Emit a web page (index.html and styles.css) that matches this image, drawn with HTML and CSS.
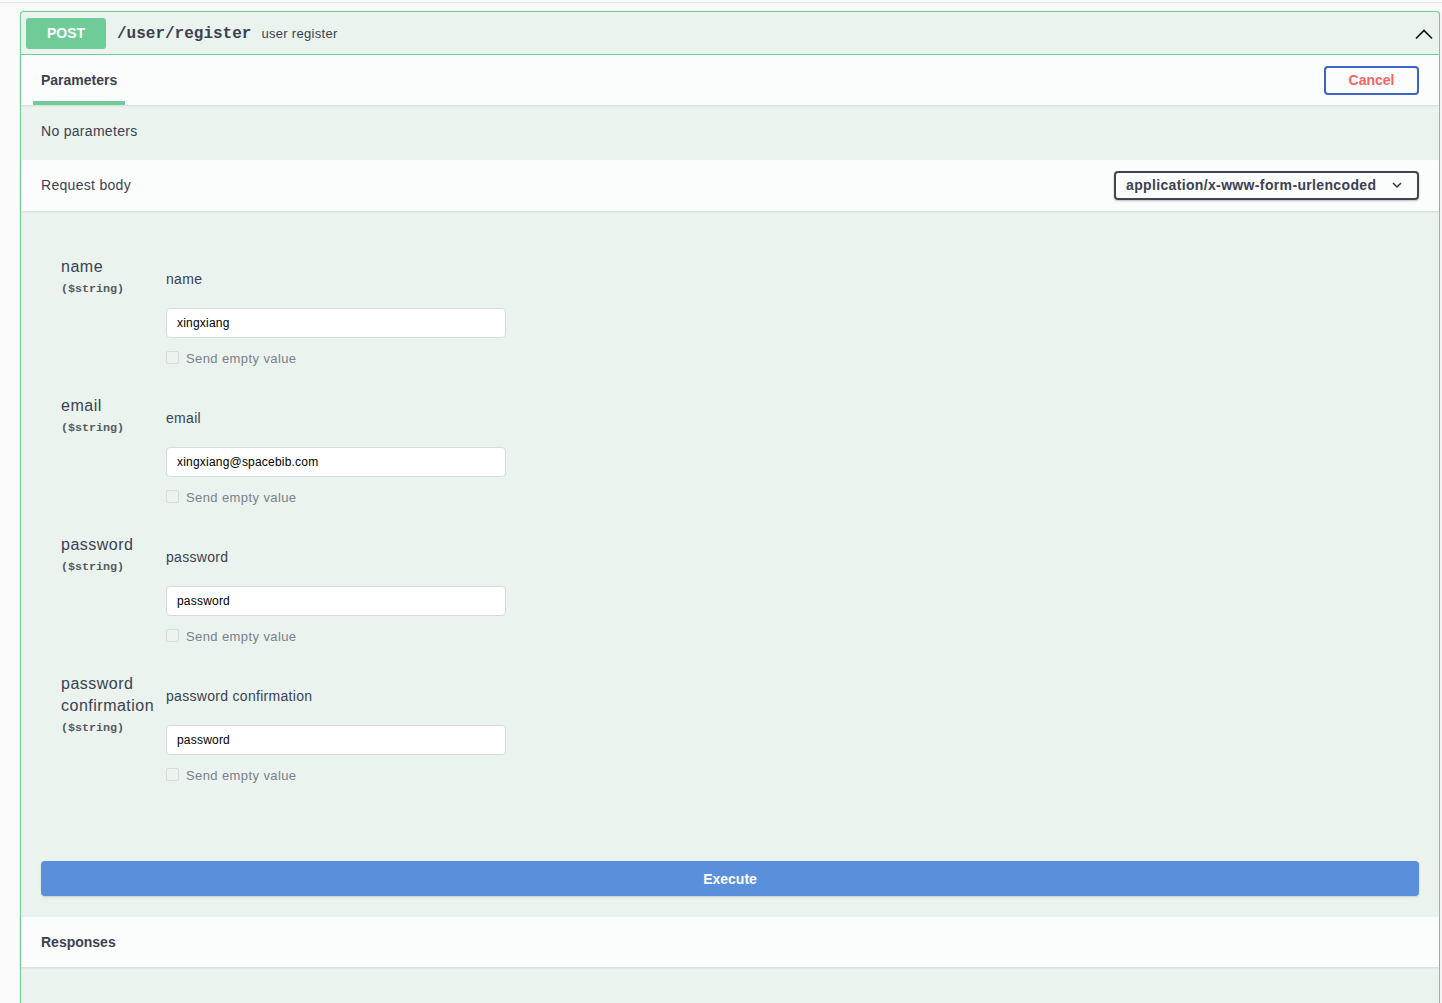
FILE: index.html
```html
<!DOCTYPE html>
<html>
<head>
<meta charset="utf-8">
<link rel="stylesheet" href="styles.css">
</head>
<body>
<div class="topline"></div>
<div class="wrap">
  <div class="opblock">
    <div class="summary">
      <span class="method">POST</span>
      <span class="path">/user/register</span>
      <span class="desc">user register</span>
      <span class="spacer"></span>
      <svg class="chev" width="20" height="20" viewBox="0 0 20 20"><polyline points="2,14.5 10,6.5 18,14.5" fill="none" stroke="#111" stroke-width="1.6"/></svg>
    </div>
    <div class="tabhead">
      <div class="tab">Parameters</div>
      <button class="cancel">Cancel</button>
    </div>
    <div class="noparams">No parameters</div>
    <div class="bodyhead">
      <div class="bodytitle">Request body</div>
      <div class="select">application/x-www-form-urlencoded
        <svg width="12" height="8" viewBox="0 0 12 8"><polyline points="2,2 6,6 10,2" fill="none" stroke="#333" stroke-width="1.5"/></svg>
      </div>
    </div>
    <div class="formbody">
      <div class="row">
        <div class="label"><div class="pname">name</div><div class="ptype">($string)</div></div>
        <div class="field">
          <div class="fdesc">name</div>
          <div class="input">xingxiang</div>
          <div class="empty"><span class="box"></span>Send empty value</div>
        </div>
      </div>
      <div class="row">
        <div class="label"><div class="pname">email</div><div class="ptype">($string)</div></div>
        <div class="field">
          <div class="fdesc">email</div>
          <div class="input">xingxiang@spacebib.com</div>
          <div class="empty"><span class="box"></span>Send empty value</div>
        </div>
      </div>
      <div class="row">
        <div class="label"><div class="pname">password</div><div class="ptype">($string)</div></div>
        <div class="field">
          <div class="fdesc">password</div>
          <div class="input">password</div>
          <div class="empty"><span class="box"></span>Send empty value</div>
        </div>
      </div>
      <div class="row">
        <div class="label"><div class="pname">password confirmation</div><div class="ptype">($string)</div></div>
        <div class="field">
          <div class="fdesc">password confirmation</div>
          <div class="input">password</div>
          <div class="empty"><span class="box"></span>Send empty value</div>
        </div>
      </div>
      <button class="execute">Execute</button>
    </div>
    <div class="responses">Responses</div>
    <div class="tail"></div>
  </div>
</div>
</body>
</html>
```
FILE: styles.css
```css
* { box-sizing: border-box; }
html, body { margin: 0; padding: 0; }
body {
  background: #fafafa;
  font-family: "Liberation Sans", Arial, sans-serif;
  color: #3b4151;
  height: 1003px;
  overflow: hidden;
  letter-spacing: 0.3px;
}
.topline {
  height: 3px;
  border-bottom: 1px solid #e4e4e4;
}
.wrap {
  padding: 8px 2px 0 20px;
}
.opblock {
  border: 1px solid #6fcf97;
  border-bottom: none;
  border-radius: 4px 4px 0 0;
  background: #eaf3ee;
  box-shadow: 0 0 2px rgba(0,0,0,.12);
}
.summary {
  display: flex;
  align-items: center;
  height: 43px;
  padding: 5px;
  border-bottom: 1px solid #6fcf97;
}
.method {
  width: 80px;
  height: 31px;
  background: #6fcb98;
  border-radius: 3px;
  color: #fff;
  font-size: 14px;
  font-weight: 700;
  display: flex;
  align-items: center;
  justify-content: center;
  letter-spacing: 0;
}
.path {
  font-family: "Liberation Mono", "Courier New", monospace;
  font-weight: 700;
  font-size: 16px;
  margin-left: 11px;
  color: #3b4151;
  letter-spacing: 0;
  padding-top: 2px;
}
.desc {
  font-size: 13px;
  margin-left: 10px;
  color: #3b4151;
  padding-top: 1px;
}
.spacer { flex: 1; }
.chev { margin-right: 0; margin-top: 2px; }
.tabhead {
  height: 50px;
  background: #fbfdfc;
  display: flex;
  align-items: stretch;
  justify-content: space-between;
  padding: 0 20px 0 12px;
  box-shadow: 0 1px 2px rgba(0,0,0,.1);
  position: relative;
}
.tab {
  font-size: 14px;
  font-weight: 700;
  padding: 4px 8px 0;
  width: 92px;
  display: flex;
  align-items: center;
  border-bottom: 4px solid #6fcb98;
  letter-spacing: 0;
}
.cancel {
  align-self: center;
  width: 95px;
  height: 29px;
  border: 2px solid #3d62c8;
  border-radius: 4px;
  background: transparent;
  color: #f36464;
  font-family: "Liberation Sans", Arial, sans-serif;
  font-size: 14px;
  font-weight: 700;
  padding-top: 1px;
}
.noparams {
  height: 55px;
  padding: 0 20px 3px;
  display: flex;
  align-items: center;
  font-size: 14px;
}
.bodyhead {
  height: 51px;
  background: #fbfdfc;
  display: flex;
  align-items: center;
  justify-content: space-between;
  padding: 0 20px 1px;
  box-shadow: 0 1px 2px rgba(0,0,0,.1);
  position: relative;
}
.bodytitle { font-size: 14px; }
.select {
  width: 305px;
  height: 29px;
  border: 2px solid #41444e;
  border-radius: 4px;
  box-shadow: 0 1px 2px rgba(0,0,0,.25);
  font-size: 14px;
  font-weight: 700;
  color: #3b4151;
  display: flex;
  align-items: center;
  justify-content: space-between;
  padding: 0 14px 0 10px;
  letter-spacing: 0.35px;
}
.formbody {
  padding: 44px 20px 21px 20px;
}
.row {
  display: grid;
  grid-template-columns: 105px 340px;
  padding-left: 20px;
  margin-bottom: 26px;
}
.pname {
  font-size: 16px;
  line-height: 22px;
  padding-right: 4px;
  padding-top: 1px;
  letter-spacing: 0.5px;
}
.ptype {
  font-family: "Liberation Mono", "Courier New", monospace;
  font-weight: 700;
  font-size: 11.7px;
  line-height: 14px;
  margin-top: 4px;
  color: #555a63;
  letter-spacing: 0;
}
.fdesc {
  font-size: 14px;
  line-height: 20px;
  margin-top: 14px;
}
.input {
  margin-top: 19px;
  height: 30px;
  background: #fff;
  border: 1px solid #d9d9d9;
  border-radius: 4px;
  font-size: 12px;
  color: #000;
  padding: 0 10px;
  display: flex;
  align-items: center;
  letter-spacing: 0.2px;
}
.empty {
  margin-top: 10px;
  height: 20px;
  display: flex;
  align-items: center;
  font-size: 13px;
  color: #7b808b;
  letter-spacing: 0.4px;
}
.box {
  width: 13px;
  height: 13px;
  border: 1px solid #d7dbd9;
  border-radius: 2px;
  background: #eef3f0;
  margin-right: 7px;
  margin-top: -2px;
}
.execute {
  display: block;
  width: 100%;
  height: 35px;
  margin-top: 76px;
  background: #5a8fdc;
  border: none;
  border-radius: 4px;
  box-shadow: 0 1px 2px rgba(0,0,0,.15);
  color: #fff;
  font-family: "Liberation Sans", Arial, sans-serif;
  font-size: 14px;
  font-weight: 700;
}
.responses {
  height: 50px;
  background: #fbfdfc;
  padding: 0 20px;
  display: flex;
  align-items: center;
  font-size: 14px;
  font-weight: 700;
  box-shadow: 0 1px 2px rgba(0,0,0,.1);
  position: relative;
  letter-spacing: 0;
}
.tail { height: 60px; }
```
